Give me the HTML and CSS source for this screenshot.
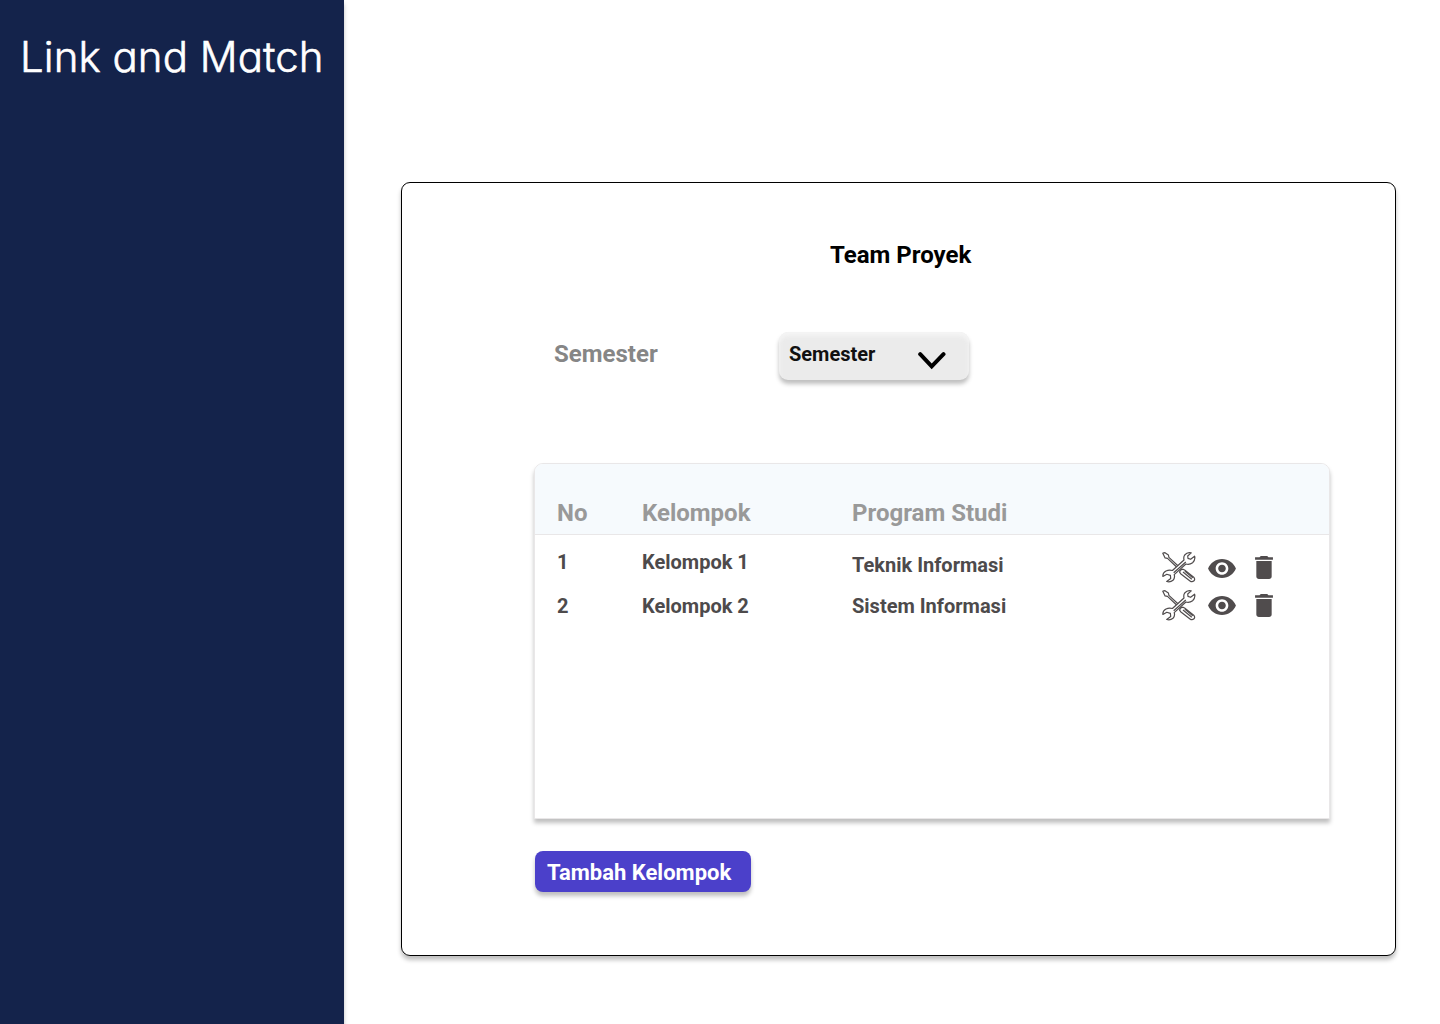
FILE: index.html
```html
<!DOCTYPE html>
<html lang="id">
<head>
<meta charset="utf-8">
<title>Link and Match</title>
<link rel="stylesheet" href="styles.css">
</head>
<body>
<svg class="sprite" aria-hidden="true">
  <symbol id="tools" viewBox="0 0 34 31">
    <path d="M.8 1.2 3 .7 6.4 3 6.9 5.4 17 14.7 15.7 16 5.5 6.4 3.1 5.9Z"/>
    <path d="M17.6 20.2Q17.8 17.600 21 17.200L22.600 18 31.700 25.200Q33.400 27 32 28.800 30 30.400 28 28.900L18.600 21.700Z"/>
    <path d="M21 20 29.800 27.300M22.800 19.100 30.800 25.800"/>
    <path d="M29.2.9Q25.400-.2 22.700 3 21.300 5 22 8L10.400 18.500Q7 17.500 4 19 .4 21 .9 24.500L4.800 22.300 8.400 23.400 8.700 26.500 4.700 29.500Q8.200 30.600 11 28.300 13.300 25.700 12.200 22.600L23.900 12Q27.600 13 30.600 10.700 33.600 8 32.600 4.200L28.600 7.300 26 6.400 25.700 4Z"/>
    <path d="M11.700 20.700 23.800 10"/>
  </symbol>
  <symbol id="eye" viewBox="1 4.5 22 15">
    <path d="M12 4.5C7 4.5 2.73 7.61 1 12c1.73 4.39 6 7.5 11 7.5s9.27-3.11 11-7.5c-1.73-4.39-6-7.5-11-7.5zM12 17c-2.76 0-5-2.24-5-5s2.24-5 5-5 5 2.24 5 5-2.24 5-5 5zm0-8c-1.66 0-3 1.34-3 3s1.34 3 3 3 3-1.34 3-3-1.34-3-3-3z"/>
  </symbol>
  <symbol id="trash" viewBox="5 3 14 18">
    <path d="M6 19c0 1.1.9 2 2 2h8c1.1 0 2-.9 2-2V7H6v12zM19 4h-3.500l-1-1h-5l-1 1H5v2h14V4z"/>
  </symbol>
</svg>
<div class="layout">
  <aside class="sidebar"><div class="brand">Link and Match</div></aside>
  <main class="main">
    <section class="card">
      <h1 class="title">Team Proyek</h1>
      <div class="filter">
        <label class="filter-label">Semester</label>
        <button class="select">
          <span>Semester</span>
          <svg class="chevron" viewBox="0 0 28 18"><path d="M2.200 2.200 13.700 14.300 25.500 2.200"/></svg>
        </button>
      </div>
      <div class="table">
        <div class="row head"><span>No</span><span>Kelompok</span><span>Program Studi</span></div>
        <div class="row first">
          <span>1</span><span>Kelompok 1</span><span class="program">Teknik Informasi</span>
          <div class="actions">
            <svg class="tools"><use href="#tools"/></svg>
            <svg class="eye"><use href="#eye"/></svg>
            <svg class="trash"><use href="#trash"/></svg>
          </div>
        </div>
        <div class="row second">
          <span>2</span><span>Kelompok 2</span><span>Sistem Informasi</span>
          <div class="actions">
            <svg class="tools"><use href="#tools"/></svg>
            <svg class="eye"><use href="#eye"/></svg>
            <svg class="trash"><use href="#trash"/></svg>
          </div>
        </div>
      </div>
      <button class="add">Tambah Kelompok</button>
    </section>
  </main>
</div>
</body>
</html>
```
FILE: styles.css
```css
* { box-sizing: border-box; }
body { margin: 0; background: #fff; font-family: Roboto, sans-serif; font-weight: 700; }
button { border: 0; margin: 0; font: inherit; text-align: left; }
.sprite { display: none; }
.layout { display: flex; height: 1024px; overflow: hidden; }
.sidebar {
  width: 344px; flex: none; padding: 30px 0 0 20px;
  background: #14234b; box-shadow: 0 4px 4px rgba(0, 0, 0, .25);
}
.brand {
  color: #fff; font: 300 42px/54px Inter, sans-serif; letter-spacing: .06px;
  -webkit-text-stroke: .6px #fff;
  font-feature-settings: "cv11"; white-space: nowrap;
}
.main { flex: 1; padding: 182px 0 0 57px; }
.card {
  width: 995px; height: 774px; padding: 58px 0 0 132px;
  border: 1px solid #000; border-radius: 9px;
  box-shadow: 0 4px 4px rgba(0, 0, 0, .25);
}
.title { margin: 0 0 0 296px; font-size: 24px; line-height: 28px; }
.filter { display: flex; margin: 63px 0 0 20px; height: 49px; }
.filter-label { width: 225px; padding-top: 8px; font-size: 24px; line-height: 28px; color: #868686; }
.select {
  display: flex; width: 190px; height: 48px; padding: 10px 0 0 10px;
  border-radius: 9px; background: #ebebeb; color: #111;
  font-size: 20px; line-height: 24px;
  box-shadow: 0 4px 4px rgba(0, 0, 0, .25), inset 0 4px 4px #f5f5f5;
}
.select span { width: 129px; }
.chevron { width: 28px; height: 18px; margin-top: 10px; fill: none; stroke: #000; stroke-width: 4; stroke-linecap: round; }
.table {
  width: 796px; height: 356px; margin-top: 82px;
  border: 1px solid #e9e7e8; border-radius: 9px 9px 0 0;
  background: #fff; box-shadow: 0 4px 4px rgba(0, 0, 0, .25);
}
.row {
  display: grid; grid-template-columns: 85px 210px 310px 1fr;
  padding-left: 22px; font-size: 20px; line-height: 24px; color: #4d4a4b;
}
.head {
  height: 71px; padding-top: 35px; border-bottom: 1px solid #e9e7e8;
  border-radius: 8px 8px 0 0; background: #f6fafd;
  color: #999; font-size: 24px; line-height: 28px;
}
.first { height: 54px; padding-top: 15px; }
.program { padding-top: 3px; }
.second { height: 40px; padding-top: 5px; }
.actions { display: flex; align-items: center; height: 31px; margin-top: 2px; }
.second .actions { margin-top: -4px; }
.tools { width: 34px; height: 31px; fill: #fff; stroke: #504c4d; stroke-width: 1.2; stroke-linejoin: round; }
.eye { width: 28px; height: 19px; margin-left: 12px; fill: #504c4d; }
.trash { width: 18px; height: 23px; margin-left: 19px; fill: #504c4d; }
.first .eye { margin-top: 1px; }
.second .eye, .second .trash { margin-bottom: 1px; }
.add {
  display: block; width: 216px; height: 41px; margin: 32px 0 0 1px; padding: 1px 12px 0;
  border-radius: 8px; background: #4b40ca; color: #fff;
  font-size: 22px; line-height: 41px; white-space: nowrap;
  box-shadow: 0 4px 4px rgba(0, 0, 0, .25);
}
```
